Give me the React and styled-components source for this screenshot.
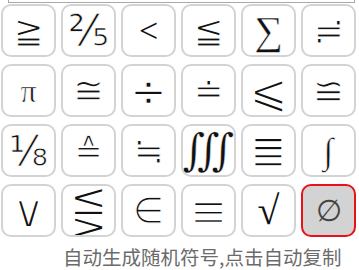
import styled, { createGlobalStyle } from "styled-components";

const GlobalStyle = createGlobalStyle`
  body {
    margin: 0;
    background: #fff;
    font-family: "DejaVu Sans", "Noto Sans CJK SC", sans-serif;
  }
`;

const symbols = [
  { s: "≧", size: 36, face: "sans", thin: 1.1 },
  { s: "⅖", size: 42, face: "sans", thin: 0.7 },
  { s: "<", size: 34 },
  { s: "≦", size: 36, face: "sans", thin: 1.1 },
  { s: "∑", size: 40, thin: 0.4 },
  { s: "≓", size: 36, face: "sans", thin: 1.1 },
  { s: "π", size: 32, thin: 0.6 },
  { s: "≅", size: 37, face: "sans", thin: 1.1 },
  { s: "÷", size: 44, face: "sans", thin: 1.4 },
  { s: "≐", size: 36, face: "sans", thin: 1.1 },
  { s: "⩽", size: 46, face: "sans", thin: 1.6 },
  { s: "≌", size: 38, face: "sans", thin: 1.1 },
  { s: "⅛", size: 40, face: "sans", thin: 0.7 },
  { s: "≙", size: 34, face: "sans", thin: 1.1 },
  { s: "≒", size: 36, face: "sans", thin: 1.1 },
  { s: "∭", size: 44, thin: 0.5 },
  { s: "≣", size: 44, face: "sans", thin: 1.6 },
  { s: "∫", size: 36, thin: 0.6 },
  { s: "∨", size: 46, face: "sans", thin: 2 },
  { s: "⋚", size: 46, face: "sans", thin: 1.6 },
  { s: "∈", size: 36, face: "sans", thin: 1.2 },
  { s: "≡", size: 46, face: "sans", thin: 2.2 },
  { s: "√", size: 40 },
  { s: "∅", size: 30, active: true },
];

const faces = {
  sans: '"DejaVu Sans", sans-serif',
  serif: '"Liberation Serif", "DejaVu Serif", serif',
};

const App = () => {
  const copy = (s) => {
    if (navigator.clipboard) navigator.clipboard.writeText(s).catch(() => {});
  };

  return (
    <Wrapper>
      <GlobalStyle />
      <Output />
      <Grid>
        {symbols.map((item, index) => {
          return (
            <SymbolButton
              key={index}
              type="button"
              $active={item.active}
              $size={item.size}
              $face={item.face || "serif"}
              $thin={item.thin || 0}
              onClick={() => copy(item.s)}
            >
              {item.s}
            </SymbolButton>
          );
        })}
      </Grid>
      <Hint>自动生成随机符号,点击自动复制</Hint>
    </Wrapper>
  );
};

const Wrapper = styled.div`
  width: 359px;
`;

const Output = styled.div`
  margin-left: 8px;
  width: 345px;
  height: 2px;
  border: 1px solid #a9a9a9;
  border-top: none;
`;

const Grid = styled.div`
  display: grid;
  grid-template-columns: repeat(6, 55px);
  grid-auto-rows: 53px;
  column-gap: 5px;
  row-gap: 7px;
  padding-left: 1px;
  margin-top: 1px;
`;

const SymbolButton = styled.button`
  display: flex;
  align-items: center;
  justify-content: center;
  overflow: hidden;
  padding: 0;
  border: 2px solid ${(p) => (p.$active ? "#e8101a" : "#d3d3d3")};
  border-radius: 10px;
  background: ${(p) => (p.$active ? "#d3d3d3" : "#fff")};
  color: ${(p) => (p.$active ? "#444" : "#111")};
  font-family: ${(p) => faces[p.$face]};
  font-size: ${(p) => p.$size || 30}px;
  font-weight: 400;
  line-height: 40px;
  -webkit-text-stroke: ${(p) => p.$thin}px
    ${(p) => (p.$active ? "#d3d3d3" : "#fff")};
  cursor: pointer;
`;

const Hint = styled.p`
  margin: 8px 0 0 63px;
  font-family: "Noto Sans CJK SC", sans-serif;
  font-size: 19.5px;
  line-height: 24px;
  color: #6b6b6b;
`;

export default App;
